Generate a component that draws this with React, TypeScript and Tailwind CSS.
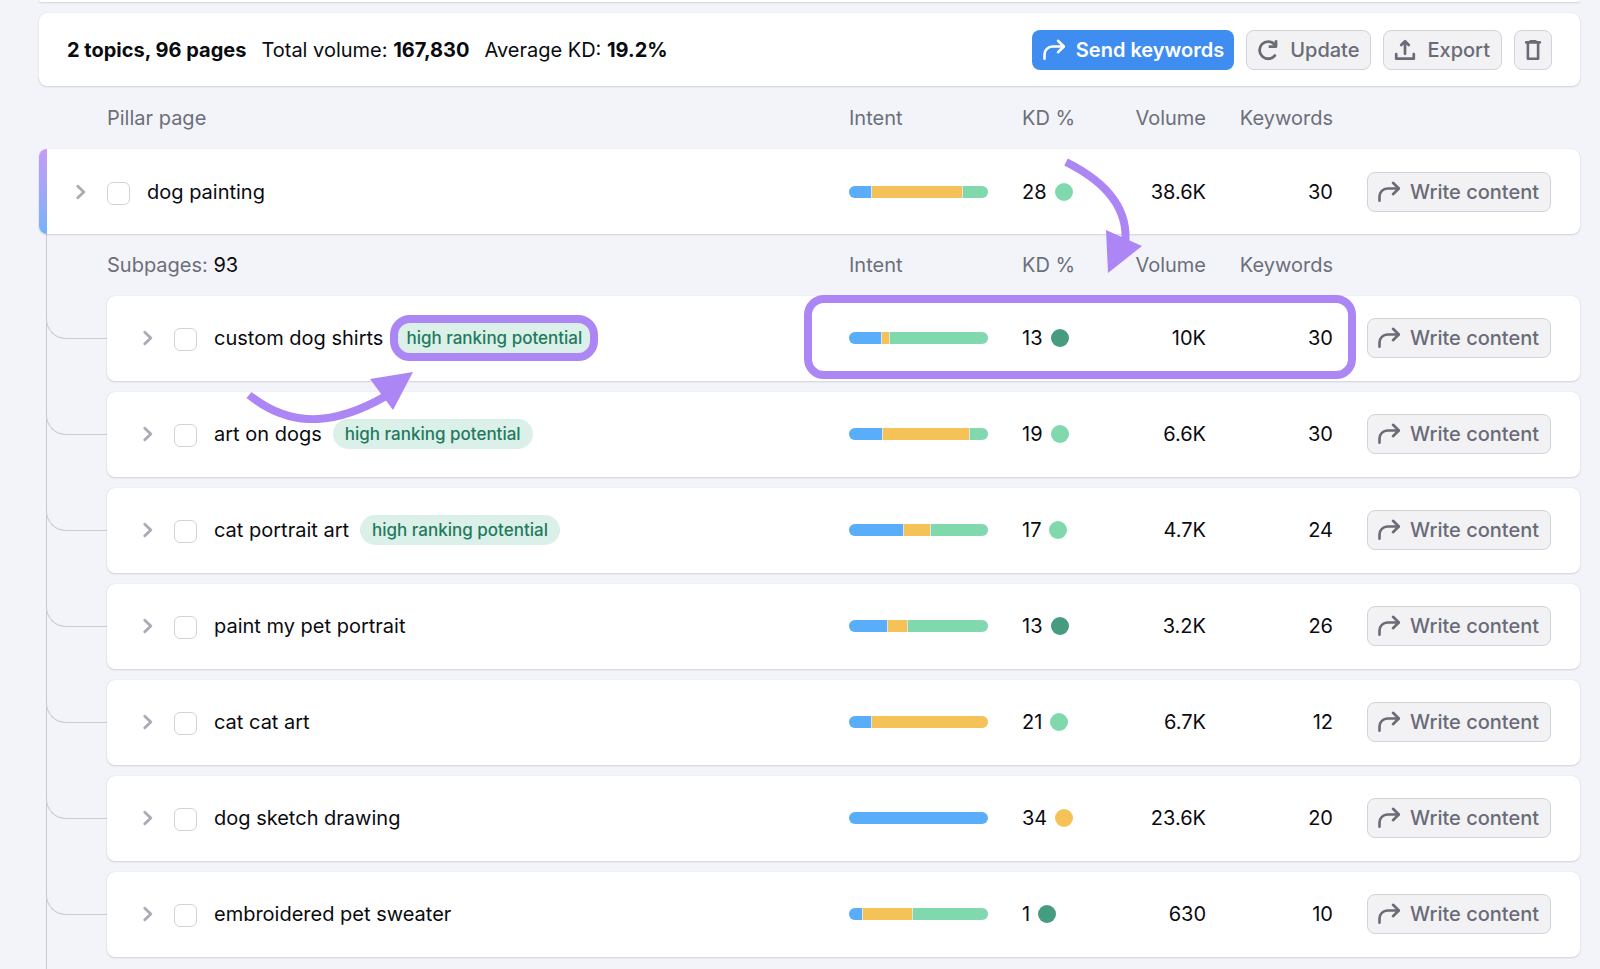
import React from "react";

type Page = {
  name: string;
  badge?: boolean;
  highlight?: boolean;
  intent: [blue: number, yellow: number, green: number];
  kd: number;
  level: "veryEasy" | "easy" | "possible";
  volume: string;
  keywords: number;
};

const pillar: Page = { name: "dog painting", intent: [65, 269, 76], kd: 28, level: "easy", volume: "38.6K", keywords: 30 };

const subpages: Page[] = [
  { name: "custom dog shirts", badge: true, highlight: true, intent: [95, 21, 293], kd: 13, level: "veryEasy", volume: "10K", keywords: 30 },
  { name: "art on dogs", badge: true, intent: [99, 254, 55], kd: 19, level: "easy", volume: "6.6K", keywords: 30 },
  { name: "cat portrait art", badge: true, intent: [162, 77, 172], kd: 17, level: "easy", volume: "4.7K", keywords: 24 },
  { name: "paint my pet portrait", intent: [114, 57, 238], kd: 13, level: "veryEasy", volume: "3.2K", keywords: 26 },
  { name: "cat cat art", intent: [65, 349, 0], kd: 21, level: "easy", volume: "6.7K", keywords: 12 },
  { name: "dog sketch drawing", intent: [1, 0, 0], kd: 34, level: "possible", volume: "23.6K", keywords: 20 },
  { name: "embroidered pet sweater", intent: [38, 148, 222], kd: 1, level: "veryEasy", volume: "630", keywords: 10 },
];

const levelColor = {
  veryEasy: "bg-[#459c80]",
  easy: "bg-[#80d9ad]",
  possible: "bg-[#f4c257]",
};

const segmentColor = ["bg-[#5aadf8]", "bg-[#f4c257]", "bg-[#80d9ad]"];

const cardShadow = "shadow-[0_0_1px_rgba(25,27,35,0.16),0_1px_2px_rgba(25,27,35,0.14)]";
const grayButton =
  "flex h-10 items-center rounded-lg border border-[#d1d3da] bg-[#f2f2f5] font-medium text-[#696b76]";

function ForwardIcon() {
  return (
    <svg className="size-6 shrink-0" viewBox="0 0 24 24" fill="none" stroke="currentColor" strokeWidth="2.6" strokeLinecap="round" strokeLinejoin="round" aria-hidden="true">
      <path d="M2.500 20.800v-4.300a8 8 0 0 1 8-8H21.500" />
      <path d="M16 2.800l5.800 5.700L16 14.200" />
    </svg>
  );
}

function RefreshIcon() {
  return (
    <svg className="size-6 shrink-0" viewBox="0 0 24 24" fill="none" stroke="currentColor" strokeWidth="2.800" aria-hidden="true">
      <path d="M18.800 17.600A8.600 8.600 0 1 1 18.400 6.200" strokeLinecap="round" />
      <path d="M20 2.200v6.400h-7.300" strokeLinejoin="round" />
    </svg>
  );
}

function ExportIcon() {
  return (
    <svg className="size-6 shrink-0" viewBox="0 0 24 24" fill="none" stroke="currentColor" strokeWidth="2.700" strokeLinecap="round" strokeLinejoin="round" aria-hidden="true">
      <path d="M3.200 16v4.700h17.600V16" />
      <path d="M12 15.800V4.500" />
      <path d="M8.200 7L12 3.200 15.800 7" />
    </svg>
  );
}

function TrashIcon() {
  return (
    <svg className="size-6 shrink-0" viewBox="0 0 24 24" fill="none" stroke="currentColor" strokeWidth="2.600" strokeLinejoin="round" aria-hidden="true">
      <path d="M5.200 4.400h13.600" strokeLinecap="round" />
      <path d="M9.500 3.300h5" strokeLinecap="round" />
      <path d="M6.900 5v15.700h10.200V5" />
    </svg>
  );
}

function ColumnHeads({ children }: { children: React.ReactNode }) {
  return (
    <thead className="block">
      <tr className="flex h-[62px] items-center pr-[29px] text-[#6c6e79]">
        {children}
        <th scope="col" className="w-[173px] text-left font-normal">Intent</th>
        <th scope="col" className="w-[83px] text-left font-normal">KD %</th>
        <th scope="col" className="w-[101px] text-right font-normal">Volume</th>
        <th scope="col" className="w-[127px] text-right font-normal">Keywords</th>
        <td className="w-[218px]" />
      </tr>
    </thead>
  );
}

function PageCells({ page, inset }: { page: Page; inset: string }) {
  return (
    <>
      <td className={"flex flex-1 items-center " + inset}>
        <button type="button" aria-label={"Expand " + page.name} className="w-[10px] text-[#a9abb6]">
          <svg className="h-4 w-[10px]" viewBox="0 0 10 16" fill="none" stroke="currentColor" strokeWidth="2.800" strokeLinecap="round" strokeLinejoin="round" aria-hidden="true">
            <path d="M1.800 2.200L7.800 8l-6 5.800" />
          </svg>
        </button>
        <label className="ml-[21px] flex items-center gap-[17px]">
          <input type="checkbox" className="mt-[3px] size-[23px] appearance-none rounded-md border border-[#d1d3da] bg-white" />
          {page.name}
        </label>
        {page.badge && (
          <span className="relative ml-[11px] flex h-[30px] items-center rounded-full bg-[#dbf0e9] px-3 text-[17px] font-medium text-[#1f7a5e]">
            high ranking potential
            {page.highlight && (
              <span className="absolute -inset-x-1 -inset-y-2 rounded-[20px] border-8 border-[#ad86f5]" />
            )}
          </span>
        )}
      </td>
      <td className="w-[173px]">
        <div className="flex h-3 w-[139px] gap-px overflow-hidden rounded-full bg-[#e3e4ea]">
          {page.intent.map((share, i) =>
            share > 0 ? <span key={i} className={segmentColor[i]} style={{ flex: share + " 0 0" }} /> : null
          )}
        </div>
      </td>
      <td className="flex w-[83px] items-center gap-2">
        {page.kd}
        <span className={"size-[18px] rounded-full " + levelColor[page.level]} />
      </td>
      <td className="w-[101px] text-right">{page.volume}</td>
      <td className="w-[127px] text-right">{page.keywords}</td>
      <td className="flex w-[218px] justify-end">
        <button type="button" className={grayButton + " w-[184px] justify-between pr-[11px] pl-[9px]"}>
          <ForwardIcon />
          Write content
        </button>
      </td>
    </>
  );
}

export default function App() {
  return (
    <div className="flex min-h-screen flex-col bg-[#f3f4f9] pr-5 pl-[39px] font-['Inter',sans-serif] text-[20px] leading-7 text-[#0a0b10]">
      <div className={"h-[2px] rounded-b-lg bg-white " + cardShadow} />

      <header className={"mt-[11px] flex h-[73px] items-center justify-between rounded-lg bg-white pr-7 pl-7 " + cardShadow}>
        <div className="flex gap-[15px]">
          <strong className="font-bold">2 topics, 96 pages</strong>
          <span>Total volume: <strong className="font-bold">167,830</strong></span>
          <span>Average KD: <strong className="font-bold">19.2%</strong></span>
        </div>
        <div className="flex gap-3">
          <button type="button" className="flex h-10 items-center gap-2.5 rounded-lg bg-[#3f8df1] px-2.5 font-semibold text-white">
            <ForwardIcon />
            Send keywords
          </button>
          <button type="button" className={grayButton + " gap-2.5 pr-[11px] pl-[9px]"}>
            <RefreshIcon />
            Update
          </button>
          <button type="button" className={grayButton + " gap-2.5 pr-[11px] pl-[9px]"}>
            <ExportIcon />
            Export
          </button>
          <button type="button" aria-label="Delete" className={grayButton + " w-[38px] justify-center"}>
            <TrashIcon />
          </button>
        </div>
      </header>

      <table className="mt-px block">
        <ColumnHeads>
          <th scope="col" className="flex-1 pl-[68px] text-left font-normal">Pillar page</th>
        </ColumnHeads>
        <tbody className="block">
          <tr className={"relative z-10 flex h-[85px] items-center rounded-lg bg-white pr-[29px] " + cardShadow}>
            <td className="h-full w-2 rounded-l-lg bg-linear-to-b from-[#c49af7] to-[#72b3f9]" />
            <PageCells page={pillar} inset="pl-[29px]" />
            <td className="pointer-events-none absolute top-[9px] right-[436px]">
              <svg width="80" height="117" viewBox="0 0 80 117" fill="none" aria-hidden="true">
                <path d="M2 4C48 27 65 55 61 87" stroke="#ad86f5" strokeWidth="8" />
                <path d="M42 72L78 88L44 115Z" fill="#ad86f5" />
              </svg>
            </td>
          </tr>
        </tbody>
      </table>

      <section className="ml-[7px] flex-1 border-l border-[#c9cbd4] pl-[60px]">
        <table className="block">
          <ColumnHeads>
            <th scope="col" className="flex-1 text-left font-normal">
              Subpages: <span className="text-[#0a0b10]">93</span>
            </th>
          </ColumnHeads>
          <tbody className="flex flex-col gap-[11px]">
            {subpages.map((page) => (
              <tr key={page.name} className={"relative flex h-[85px] items-center rounded-lg bg-white pr-[29px] pb-px " + cardShadow + (page.highlight ? " z-10" : "")}>
                <td className="absolute bottom-[42px] -left-[61px] h-5 w-[61px] rounded-bl-[20px] border-b border-l border-[#c9cbd4]" />
                <PageCells page={page} inset="pl-9" />
                {page.highlight && (
                  <td className="pointer-events-none absolute -top-px right-[224px] h-[84px] w-[552px] rounded-[20px] border-8 border-[#ad86f5]" />
                )}
                {page.highlight && (
                  <td className="pointer-events-none absolute top-[75px] left-[139px]">
                    <svg width="168" height="52" viewBox="0 0 168 52" fill="none" aria-hidden="true">
                      <path d="M3 24C43 56 86 56 140 25" stroke="#ad86f5" strokeWidth="8" />
                      <path d="M124 8L167 1L147 39Z" fill="#ad86f5" />
                    </svg>
                  </td>
                )}
              </tr>
            ))}
          </tbody>
        </table>
      </section>
    </div>
  );
}
